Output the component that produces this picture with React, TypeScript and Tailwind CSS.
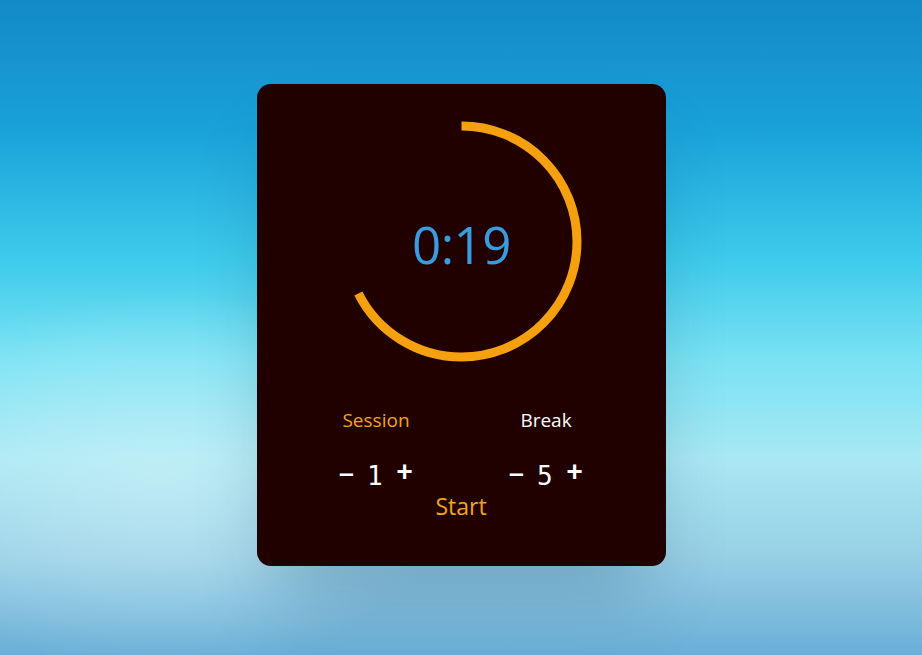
import React from "react";

const R = 115.5;
const C = 2 * Math.PI * R;

function Ring({ progress }: { progress: number }) {
  return (
    <svg width="241" height="241" viewBox="0 0 241 241" className="block">
      <circle
        cx="120.5"
        cy="120.5"
        r={R}
        fill="none"
        stroke="#f5a00f"
        strokeWidth="9"
        strokeDasharray={`${C * progress} ${C}`}
        transform="rotate(-90 120.5 120.5)"
      />
    </svg>
  );
}

function Stepper({ label, value, active }: { label: string; value: number; active?: boolean }) {
  return (
    <div className="w-[170px] flex flex-col items-center">
      <div
        className={`text-[19px] leading-[24px] ${active ? "text-[#f2a51c]" : "text-white"}`}
        style={{ fontFamily: '"Open Sans", sans-serif' }}
      >
        {label}
      </div>
      <div className="mt-[27px] flex items-center gap-[14px] h-[30px] text-white">
        <button className="font-['DejaVu_Sans_Mono',monospace] font-bold text-[22px] leading-[30px]">–</button>
        <span className="font-['DejaVu_Sans_Mono',monospace] text-[26px] leading-[30px] pt-[3px]">{value}</span>
        <button className="font-['DejaVu_Sans_Mono',monospace] font-bold text-[26px] leading-[30px] -mt-[6px]">+</button>
      </div>
    </div>
  );
}

export default function App() {
  return (
    <div
      className="w-full h-[655px] overflow-hidden flex justify-center"
      style={{
        background:
          "radial-gradient(ellipse 380px 240px at 160px 480px, rgba(220,246,250,0.45), rgba(220,246,250,0) 80%), linear-gradient(to bottom, #1489c8 0%, #1aa2d9 20%, #3fcbeb 40%, #7ae2f3 55%, #a8e8f3 70%, #98cfe5 85%, #6aaed6 100%)",
      }}
    >
      <div className="mt-[84px] w-[409px] h-[482px] rounded-[14px] bg-[#210000] shadow-[0_45px_70px_-20px_rgba(0,40,80,0.25)] flex flex-col items-center pt-[37px]">
        <div className="relative w-[241px] h-[241px] ml-[1px]">
          <Ring progress={0.675} />
          <div className="absolute inset-0 flex items-center justify-center pt-[6px]">
            <span
              className="text-[51px] leading-none text-[#3a9ce0] tracking-[-0.5px]"
              style={{ fontFamily: '"Open Sans", sans-serif' }}
            >
              0:19
            </span>
          </div>
        </div>
        <div className="mt-[46px] flex">
          <Stepper label="Session" value={1} active />
          <Stepper label="Break" value={5} />
        </div>
        <button
          className="mt-[3px] text-[23px] leading-[28px] text-[#f2a51c]"
          style={{ fontFamily: '"Open Sans", sans-serif' }}
        >
          Start
        </button>
      </div>
    </div>
  );
}
